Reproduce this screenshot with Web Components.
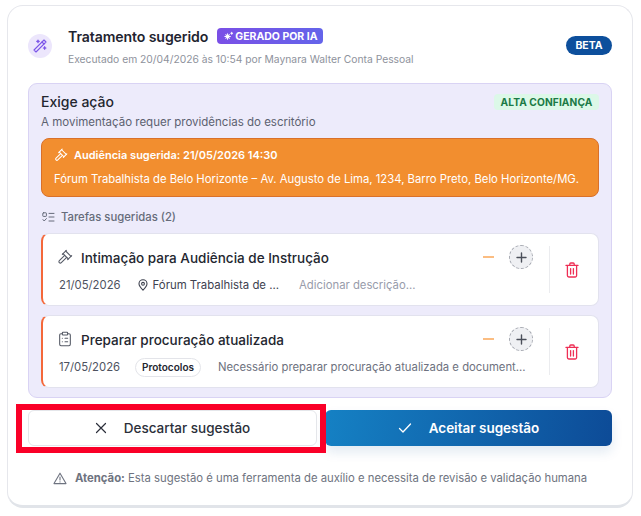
<!DOCTYPE html>
<html lang="pt-BR">
<head>
<meta charset="utf-8">
<title>Tratamento sugerido</title>
<style>
html, body { margin: 0; background: #fff; }
body { font-family: Inter, "Noto Sans", sans-serif; width: 641px; height: 516px; overflow: hidden; }
</style>
</head>
<body>
<suggestion-card>
    <span slot="title">Tratamento sugerido</span>
    <span slot="meta">Executado em 20/04/2026 às 10:54 por Maynara Walter Conta Pessoal</span>

    <action-panel>
        <hearing-box slot="hearing"></hearing-box>
        <task-card kind="gavel" title="Intimação para Audiência de Instrução" date="21/05/2026" place="Fórum Trabalhista de ..." desc="Adicionar descrição..." muted></task-card>
        <task-card kind="clipboard" title="Preparar procuração atualizada" date="17/05/2026" tag="Protocolos" desc="Necessário preparar procuração atualizada e document..."></task-card>
    </action-panel>
</suggestion-card>

<script>
const icons = {
    gavel: `<path d="m14.5 12.5-8 8a2.12 2.12 0 1 1-3-3l8-8"/><path d="m16 16 6-6"/><path d="m8 8 6-6"/><path d="m9 7 8 8"/><path d="m21 11-8-8"/>`,
    clipboard: `<rect x="8" y="2" width="8" height="4" rx="1"/><path d="M16 4h2a2 2 0 0 1 2 2v14a2 2 0 0 1-2 2H6a2 2 0 0 1-2-2V6a2 2 0 0 1 2-2h2"/><path d="M12 11h4M12 16h4M8 11h.01M8 16h.01"/>`
}

customElements.define('suggestion-card', class extends HTMLElement {
    constructor() {
        super()
        this.attachShadow({ mode: "open" }).innerHTML = /*html*/`
        <style>
        :host {
            display: block;
            box-sizing: border-box;
            width: 626px;
            height: 503px;
            margin: 5px 0 0 7px;
            padding: 12px 20px 0;
            background: #fff;
            border: 1px solid #e6e7ec;
            border-bottom: 3px solid #e1e4e9;
            border-radius: 16px;
            color: #1f2430;
        }
        header { display: flex; align-items: center; height: 55px; margin-bottom: 10px; }
        .spark {
            width: 24px; height: 24px; border-radius: 50%;
            background: #ece6fc; color: #7c55e8;
            display: grid; place-items: center; flex: none;
            margin-top: 1px;
        }
        .head { margin-left: 16px; flex: 1; display: grid; gap: 8px; margin-top: 1px; }
        .line { display: flex; align-items: center; gap: 9px; height: 18px; }
        .title { font-size: 14.1px; font-weight: 600; letter-spacing: -.1px; }
        .ai {
            display: flex; align-items: center; gap: 1px;
            height: 16px; width: 106px; box-sizing: border-box; padding: 0 0 0 6px; border-radius: 4px;
            background: linear-gradient(90deg, #7a4fe6, #6464ea);
            color: #fff; font-size: 10.5px; font-weight: 700; white-space: nowrap;
        }
        .meta { font-size: 10.3px; color: #8e929c; white-space: nowrap; }
        .beta {
            align-self: center; margin-top: -1px;
            width: 46px; height: 19px; border-radius: 10px;
            background: #0d4f9c; color: #fff;
            font-size: 10.5px; font-weight: 700;
            display: grid; place-items: center;
        }
        .actions { display: flex; gap: 8px; margin-top: 12px; }
        .wrap { position: relative; width: 289px; display: flex; }
        .mark {
            position: absolute; top: -6px; left: -12px; right: -9px; bottom: -7px;
            border: 6px solid #fa0028; pointer-events: none;
        }
        button {
            font: inherit; height: 36px; border-radius: 6px; cursor: pointer;
            display: flex; align-items: center; justify-content: center; gap: 17px;
            font-size: 13.5px; font-weight: 500; padding: 0;
        }
        .discard {
            width: 289px;
            background: #fff; color: #2b2f3a;
            border: 1px solid #e4e6ea;
        }
        .accept {
            width: 287px;
            color: #fff; border: 0; font-weight: 600;
            background: linear-gradient(100deg, #1581c4, #0d4b97);
            box-shadow: 0 6px 12px rgba(15, 80, 150, .12);
        }
        .note {
            display: flex; align-items: center; justify-content: center; gap: 8px;
            margin-top: 25px; font-size: 11.3px; color: #6e7380; white-space: nowrap;
        }
        .note b { font-weight: 700; color: #6e7380; }
        </style>
        <header>
            <div class="spark">
                <svg width="16" height="16" viewBox="0 0 24 24" fill="none" stroke="currentColor" stroke-width="1.7" stroke-linecap="round" stroke-linejoin="round"><path d="M6 21 21 6l-3-3L3 18l3 3"/><path d="m15 6 3 3"/><path d="M9 3a2 2 0 0 0 2 2 2 2 0 0 0-2 2 2 2 0 0 0-2-2 2 2 0 0 0 2-2"/><path d="M19 13a2 2 0 0 0 2 2 2 2 0 0 0-2 2 2 2 0 0 0-2-2 2 2 0 0 0 2-2"/></svg>
            </div>
            <div class="head">
                <div class="line">
                    <span class="title"><slot name="title"></slot></span>
                    <span class="ai">
                        <svg width="11" height="11" viewBox="0 0 12 12" fill="none" stroke="#fff" stroke-width="1.1" stroke-linecap="round"><path d="M5 3v6M2 6h6M3 4l4 4M7 4 3 8M9.5 1.5v2M8.5 2.5h2"/></svg>
                        GERADO POR IA
                    </span>
                </div>
                <div class="meta"><slot name="meta"></slot></div>
            </div>
            <div class="beta">BETA</div>
        </header>
        <slot></slot>
        <div class="actions">
            <div class="wrap">
                <button class="discard">
                    <svg width="12" height="12" viewBox="0 0 12 12" fill="none" stroke="currentColor" stroke-width="1.2" stroke-linecap="round"><path d="M1.5 1.5l9 9M10.5 1.5l-9 9"/></svg>
                    Descartar sugestão
                </button>
                <span class="mark"></span>
            </div>
            <button class="accept">
                <svg width="14" height="12" viewBox="0 0 14 12" fill="none" stroke="currentColor" stroke-width="1.3" stroke-linecap="round" stroke-linejoin="round"><path d="M1.5 6.5 5 10l7.5-8"/></svg>
                Aceitar sugestão
            </button>
        </div>
        <div class="note">
            <svg width="14" height="13" viewBox="0 0 14 13" fill="none" stroke="currentColor" stroke-width="1.1" stroke-linejoin="round" stroke-linecap="round"><path d="M7 1.2 13 11.6H1Z"/><path d="M7 5v3M7 9.8v.1"/></svg>
            <span><b>Atenção:</b> Esta sugestão é uma ferramenta de auxílio e necessita de revisão e validação humana</span>
        </div>
        `
    }
})

customElements.define('action-panel', class extends HTMLElement {
    constructor() {
        super()
        this.attachShadow({ mode: "open" }).innerHTML = /*html*/`
        <style>
        :host {
            display: block;
            box-sizing: border-box;
            height: 315px;
            padding: 9px 12px 0;
            background: #edebfb;
            border: 1px solid #d9d3f4;
            border-radius: 9px;
        }
        .top { display: flex; justify-content: space-between; align-items: flex-start; height: 45px; }
        h3 { margin: 0 0 3px; font-size: 14px; line-height: 18px; font-weight: 500; color: #23262f; }
        p { margin: 0; font-size: 11.5px; line-height: 16px; color: #5c6170; }
        .conf {
            height: 16px; width: 105px; border-radius: 4px; margin-top: 1px;
            background: #dcf8e8; color: #1a7a45;
            font-size: 10.2px; font-weight: 700; letter-spacing: .1px;
            display: grid; place-items: center;
        }
        .sub {
            display: flex; align-items: center; gap: 6px;
            height: 16px; margin: 12px 0 8px 1px;
            font-size: 11.3px; color: #666b7a; font-weight: 500;
        }
        .tasks { display: grid; gap: 9px; }
        </style>
        <div class="top">
            <div>
                <h3>Exige ação</h3>
                <p>A movimentação requer providências do escritório</p>
            </div>
            <div class="conf">ALTA CONFIANÇA</div>
        </div>
        <slot name="hearing"></slot>
        <div class="sub">
            <svg width="13" height="11" viewBox="0 0 13 11" fill="none" stroke="currentColor" stroke-width="1" stroke-linecap="round" stroke-linejoin="round"><rect x=".8" y=".8" width="3.6" height="3.6" rx=".6"/><path d="M1 7.6 2.2 9l2.2-2.4M7 1.4h5M7 5h5M7 9h5"/></svg>
            Tarefas sugeridas (2)
        </div>
        <div class="tasks"><slot></slot></div>
        `
    }
})

customElements.define('hearing-box', class extends HTMLElement {
    constructor() {
        super()
        this.attachShadow({ mode: "open" }).innerHTML = /*html*/`
        <style>
        :host {
            display: block;
            box-sizing: border-box;
            height: 59px;
            padding: 0 12px;
            background: #f28e2f;
            border: 1px solid #d9702a;
            border-radius: 8px;
            color: #fff;
        }
        .a { display: flex; align-items: center; gap: 6px; height: 32px; font-size: 11px; font-weight: 600; white-space: nowrap; }
        .b { font-size: 11.3px; line-height: 16px; white-space: nowrap; }
        </style>
        <div class="a">
            <svg width="14" height="14" viewBox="0 0 24 24" fill="none" stroke="currentColor" stroke-width="1.8" stroke-linecap="round" stroke-linejoin="round">${icons.gavel}</svg>
            Audiência sugerida: 21/05/2026 14:30
        </div>
        <div class="b">Fórum Trabalhista de Belo Horizonte – Av. Augusto de Lima, 1234, Barro Preto, Belo Horizonte/MG.</div>
        `
    }
})

customElements.define('task-card', class extends HTMLElement {
    connectedCallback() {
        if (this.shadowRoot) return
        const tag = this.getAttribute('tag')
        const place = this.getAttribute('place')
        const kind = this.getAttribute('kind')
        this.attachShadow({ mode: "open" }).innerHTML = /*html*/`
        <style>
        :host {
            display: flex;
            box-sizing: border-box;
            height: 73px;
            background: #fff;
            border: 1px solid #e2e2ee;
            border-left: 2px solid #f4683a;
            border-radius: 8px;
            color: #23262f;
        }
        .main { flex: 1; min-width: 0; padding: 0 0 0 14px; }
        .t { display: flex; align-items: center; height: 48px; box-sizing: border-box; gap: 8px; font-size: 13.5px; font-weight: 500; white-space: nowrap; }
        .t > svg { color: #555a66; flex: none; margin-top: -2px; }
        .title { flex: 1; }
        .minus { width: 11px; height: 2px; background: #fbbd82; margin-right: 7px; margin-top: -2px; }
        .plus {
            width: 24px; height: 24px; box-sizing: border-box; border-radius: 50%; margin-top: -2px;
            background: #eff0f3; border: 1px dashed #a8abb3;
            display: grid; place-items: center; margin-right: 16px; color: #4b4f5a;
        }
        .m { display: flex; align-items: center; font-size: 11.3px; height: 20px; margin-top: -7px; margin-left: 2px; white-space: nowrap; color: #4e5260; }
        .place { display: flex; align-items: center; gap: 5px; margin-left: 17px; color: #3e424f; font-size: 11.4px; }
        .tag {
            margin-left: 15px; height: 19px; padding: 0 6px; box-sizing: border-box;
            border: 1px solid #e3e4e9; border-radius: 10px;
            display: grid; place-items: center;
            font-size: 10px; font-weight: 600; color: #23262f;
        }
        .desc { font-size: 11.3px; color: ${this.hasAttribute('muted') ? '#989cab' : '#6e7280'}; margin-left: ${tag ? 17 : 20}px; }
        .trash {
            flex: none; box-sizing: border-box; width: 49px; margin: 12px 0; padding-right: 4px; border-left: 1px solid #ebecef;
            display: grid; place-items: center; color: #ee2f55;
        }
        </style>
        <div class="main">
            <div class="t">
                <svg width="16" height="16" viewBox="0 0 24 24" fill="none" stroke="currentColor" stroke-width="1.6" stroke-linecap="round" stroke-linejoin="round">${icons[kind]}</svg>
                <span class="title">${this.getAttribute('title')}</span>
                <span class="minus"></span>
                <span class="plus"><svg width="11" height="11" viewBox="0 0 11 11" fill="none" stroke="currentColor" stroke-width="1.4" stroke-linecap="round"><path d="M5.5 1v9M1 5.5h9"/></svg></span>
            </div>
            <div class="m">
                <span>${this.getAttribute('date')}</span>
                ${place ? `<span class="place"><svg width="10" height="12" viewBox="0 0 10 12" fill="none" stroke="currentColor" stroke-width="1.1"><path d="M5 11.2C2.6 8.8 1 7 1 4.8a4 4 0 0 1 8 0C9 7 7.4 8.8 5 11.2Z"/><circle cx="5" cy="4.8" r="1.4"/></svg>${place}</span>` : ''}
                ${tag ? `<span class="tag">${tag}</span>` : ''}
                <span class="desc">${this.getAttribute('desc')}</span>
            </div>
        </div>
        <div class="trash">
            <svg width="14" height="16" viewBox="0 0 14 16" fill="none" stroke="currentColor" stroke-width="1.3" stroke-linecap="round" stroke-linejoin="round"><path d="M1 3.4h12M4.8 3.2V2a1 1 0 0 1 1-1h2.4a1 1 0 0 1 1 1v1.2"/><path d="M2.4 3.6v10a1.4 1.4 0 0 0 1.4 1.4h6.4a1.4 1.4 0 0 0 1.4-1.4v-10"/><path d="M5.6 6.6v5.4M8.4 6.6v5.4"/></svg>
        </div>
        `
    }
})
</script>
</body>
</html>
